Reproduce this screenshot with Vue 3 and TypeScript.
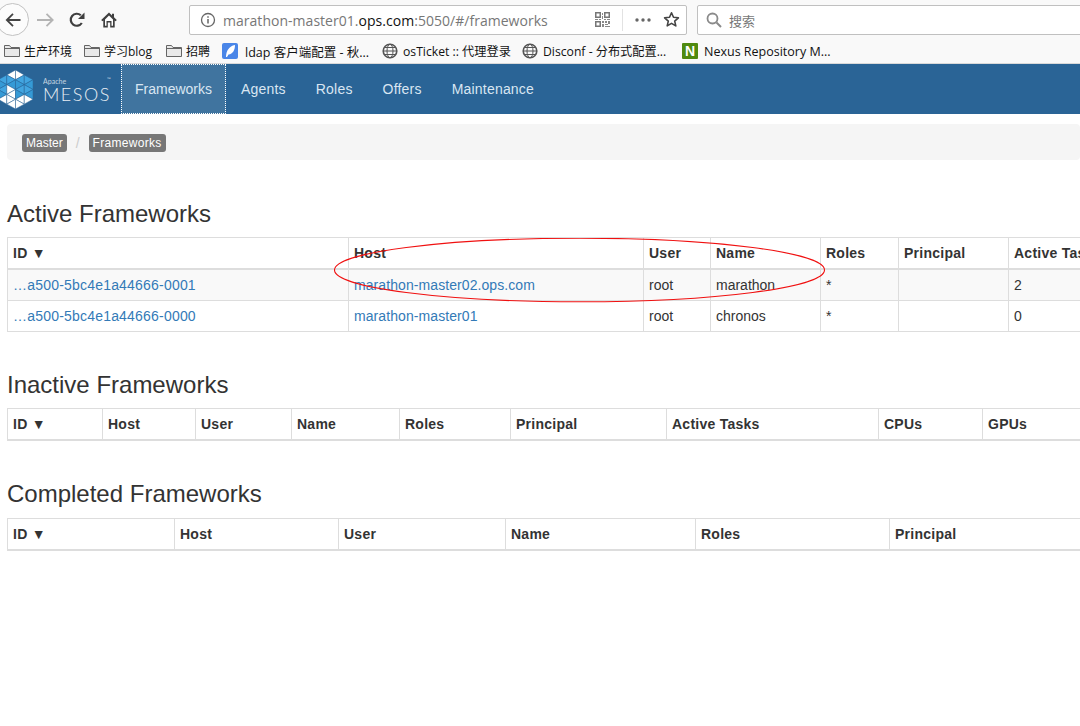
<template>
  <div class="page">
    <!-- browser toolbar -->
    <div class="toolbar">
      <div class="back-btn">
        <svg width="16" height="16" viewBox="0 0 16 16" fill="none">
          <path d="M15.500 8H1.500M8 1.800L1.800 8 8 14.200" stroke="#444" stroke-width="1.800" />
        </svg>
      </div>
      <svg class="tool-icon forward" width="18" height="16" viewBox="0 0 18 16" fill="none">
        <path d="M1 8h15.500M10.500 1.800L16.700 8l-6.200 6.200" stroke="#b4b4b4" stroke-width="1.800" />
      </svg>
      <svg class="tool-icon reload" width="16" height="16" viewBox="0 0 16 16" fill="none">
        <path d="M12.800 11A6 6 0 1 1 11.800 3.300" stroke="#3f3f3f" stroke-width="2.200" />
        <path d="M15.500 .5v6.500H9z" fill="#3f3f3f" />
      </svg>
      <svg class="tool-icon home" width="16" height="16" viewBox="0 0 16 16" fill="none">
        <path d="M8 .5L.2 8l1.200 1.200.9-.8V15.500h4.500V10.500h2.400V15.500h4.500V8.400l.9.8L15.800 8 13 5.300V1.800h-2v1.600z" fill="#3f3f3f" />
        <path d="M8 3.600L4 7.400v6.400h1.500V9h5v4.800H12V7.400z" fill="#fff" />
      </svg>
      <div class="urlbar">
        <svg class="info-icon" width="16" height="16" viewBox="0 0 16 16" fill="none">
          <circle cx="8" cy="8" r="6.500" stroke="#666" stroke-width="1.300" />
          <path d="M8 7v4.500M8 4.200v1.500" stroke="#666" stroke-width="1.500" />
        </svg>
        <span class="url"><span class="url-dim">marathon-master01.</span>ops.com<span class="url-dim">:5050/#/frameworks</span></span>
        <svg class="qr" width="15" height="15" viewBox="0 0 15 15">
          <path d="M0 0h6v6H0zM1.500 1.500v3h3v-3zM9 0h6v6H9zM10.500 1.500v3h3v-3zM0 9h6v6H0zM1.500 10.500v3h3v-3z" fill="#777" fill-rule="evenodd" />
          <path d="M7 1h1v2H7zM7 4h1v3H7zM0 7h3v1H0zM4 7h2v1H4zM9 7h2v1H9zM12 7h3v1h-3zM7 9h2v2H7zM10 9h2v2h-2zM13 9h2v3h-2zM7 12h2v3H7zM10 12h3v1h-3zM10 14h5v1h-5z" fill="#888" />
        </svg>
        <span class="url-sep"></span>
        <svg class="dots" width="16" height="4" viewBox="0 0 16 4" fill="#666">
          <circle cx="2" cy="2" r="1.700" /><circle cx="8" cy="2" r="1.700" /><circle cx="14" cy="2" r="1.700" />
        </svg>
        <svg class="star" width="17" height="17" viewBox="0 0 17 17" fill="none">
          <path d="M8.500 1.800l2 4.500 4.900.5-3.700 3.300 1.100 4.800-4.300-2.500-4.300 2.500 1.100-4.800L1.600 6.800l4.900-.5z" stroke="#444" stroke-width="1.600" stroke-linejoin="round" />
        </svg>
      </div>
      <div class="searchbar">
        <svg width="16" height="16" viewBox="0 0 16 16" fill="none">
          <circle cx="6.500" cy="6.500" r="5" stroke="#8a8a8a" stroke-width="1.800" />
          <path d="M10.500 10.500L15 15" stroke="#8a8a8a" stroke-width="2" />
        </svg>
        <span class="search-text">搜索</span>
      </div>
    </div>

    <!-- bookmarks bar -->
    <div class="bookmarks">
      <div
        v-for="b in bookmarks"
        :key="b.label"
        :class="['bookmark', `bookmark-${b.icon}`]"
        :style="{ width: b.width + 'px' }"
      >
        <svg v-if="b.icon === 'folder'" width="16" height="14" viewBox="0 0 16 14" fill="none">
          <path d="M.5 12.500V1.500h5l1.500 2h8.500v9z" fill="#e9e9e9" stroke="#666" />
          <path d="M.5 4.500h15" stroke="#666" />
        </svg>
        <svg v-else-if="b.icon === 'feather'" width="16" height="16" viewBox="0 0 16 16">
          <rect width="16" height="16" rx="2" fill="#4a86e8" />
          <path d="M4 14C4 8 7 3 13 2c0 5-2 9-6.500 9.500L5 14z" fill="#fff" />
        </svg>
        <svg v-else-if="b.icon === 'globe'" width="16" height="16" viewBox="0 0 16 16" fill="none">
          <circle cx="8" cy="8" r="6.800" stroke="#555" stroke-width="1.600" />
          <ellipse cx="8" cy="8" rx="3" ry="6.800" stroke="#555" />
          <path d="M1 8h14M2 4.500h12M2 11.500h12" stroke="#555" />
        </svg>
        <span v-else class="nexus">N</span>
        <span class="bookmark-label">{{ b.label }}</span>
      </div>
    </div>

    <!-- mesos navbar -->
    <nav class="navbar">
      <div class="brand">
        <svg class="logo" width="35" height="39" viewBox="0 0 35 39">
          <polygon
            v-for="(t, i) in logoTriangles"
            :key="i"
            :points="t.points"
            :fill="t.fill"
            stroke="#2a6496"
            stroke-width="0.5"
          />
        </svg>
        <div class="brand-text">
          <span class="brand-apache">Apache<span class="brand-tm">™</span></span>
          <span class="brand-mesos">MESOS</span>
        </div>
      </div>
      <ul class="nav-list">
        <li v-for="(item, i) in navItems" :key="item" :class="['nav-item', { active: i === 0 }]">{{ item }}</li>
      </ul>
    </nav>

    <main class="content">
      <div class="breadcrumb">
        <span class="crumb">Master</span>
        <span class="crumb-sep">/</span>
        <span class="crumb">Frameworks</span>
      </div>

      <section v-for="t in tables" :key="t.title" class="block">
        <h3 class="block-title">{{ t.title }}</h3>
        <table class="fw-table">
          <colgroup>
            <col v-for="c in t.columns" :key="c.name" :style="{ width: c.width + 'px' }" />
          </colgroup>
          <thead>
            <tr>
              <th v-for="c in t.columns" :key="c.name">{{ c.name }}</th>
            </tr>
          </thead>
          <tbody v-if="t.rows.length">
            <tr v-for="(r, ri) in t.rows" :key="ri" :class="{ odd: ri === 0 }">
              <td v-for="(v, ci) in r" :key="ci" :class="{ 'link-id': ci === 0, link: ci === 1 }">{{ v }}</td>
            </tr>
          </tbody>
        </table>
      </section>

      <!-- red annotation drawn over the screenshot -->
      <svg class="annotation" width="494" height="68" viewBox="0 0 494 68" fill="none">
        <ellipse cx="245.500" cy="32" rx="245" ry="31.800" stroke="#f01010" stroke-width="1.100" />
      </svg>
    </main>
  </div>
</template>

<script setup lang="ts">
interface Column {
  name: string
  width: number
}

interface FrameworkTable {
  title: string
  columns: Column[]
  rows: string[][]
}

function cols(names: string[], edges: number[]): Column[] {
  return names.map((name, i) => ({ name, width: edges[i + 1] - edges[i] }))
}

const navItems = ['Frameworks', 'Agents', 'Roles', 'Offers', 'Maintenance']

const bookmarks = [
  { icon: 'folder', label: '生产环境', width: 80 },
  { icon: 'folder', label: '学习blog', width: 82 },
  { icon: 'folder', label: '招聘', width: 56 },
  { icon: 'feather', label: 'ldap 客户端配置 - 秋...', width: 160 },
  { icon: 'globe', label: 'osTicket :: 代理登录', width: 140 },
  { icon: 'globe', label: 'Disconf - 分布式配置...', width: 160 },
  { icon: 'nexus', label: 'Nexus Repository M...', width: 160 }
]

const tables: FrameworkTable[] = [
  {
    title: 'Active Frameworks',
    columns: cols(
      ['ID ▼', 'Host', 'User', 'Name', 'Roles', 'Principal', 'Active Tasks'],
      [7, 348, 643, 710, 820, 898, 1008, 1120]
    ),
    rows: [
      ['…a500-5bc4e1a44666-0001', 'marathon-master02.ops.com', 'root', 'marathon', '*', '', '2'],
      ['…a500-5bc4e1a44666-0000', 'marathon-master01', 'root', 'chronos', '*', '', '0']
    ]
  },
  {
    title: 'Inactive Frameworks',
    columns: cols(
      ['ID ▼', 'Host', 'User', 'Name', 'Roles', 'Principal', 'Active Tasks', 'CPUs', 'GPUs'],
      [7, 102, 195, 291, 399, 510, 666, 878, 982, 1100]
    ),
    rows: []
  },
  {
    title: 'Completed Frameworks',
    columns: cols(
      ['ID ▼', 'Host', 'User', 'Name', 'Roles', 'Principal'],
      [7, 174, 338, 505, 695, 889, 1100]
    ),
    rows: []
  }
]

// logo mesh: columns 8.75px apart, half rows 4.875px apart
const W = '#ffffff'
const B = '#42a5e0'
const C = '#359ad6'
function tri(a: number[], b: number[], c: number[], fill: string) {
  const p = (q: number[]) => `${q[0] * 8.75},${q[1] * 4.875}`
  return { points: `${p(a)} ${p(b)} ${p(c)}`, fill }
}
const logoTriangles = [
  tri([0, 2], [1, 1], [1, 3], B),
  tri([0, 2], [0, 4], [1, 3], C),
  tri([0, 4], [1, 3], [1, 5], B),
  tri([0, 4], [0, 6], [1, 5], C),
  tri([0, 6], [1, 5], [1, 7], W),
  tri([1, 1], [2, 0], [2, 2], W),
  tri([1, 1], [1, 3], [2, 2], B),
  tri([1, 3], [2, 2], [2, 4], C),
  tri([1, 3], [1, 5], [2, 4], W),
  tri([1, 5], [2, 4], [2, 6], W),
  tri([1, 5], [1, 7], [2, 6], W),
  tri([1, 7], [2, 6], [2, 8], W),
  tri([3, 1], [2, 0], [2, 2], W),
  tri([3, 1], [3, 3], [2, 2], B),
  tri([3, 3], [2, 2], [2, 4], C),
  tri([3, 3], [3, 5], [2, 4], B),
  tri([3, 5], [2, 4], [2, 6], C),
  tri([3, 5], [3, 7], [2, 6], W),
  tri([3, 7], [2, 6], [2, 8], W),
  tri([4, 2], [3, 1], [3, 3], B),
  tri([4, 2], [4, 4], [3, 3], C),
  tri([4, 4], [3, 3], [3, 5], B),
  tri([4, 4], [4, 6], [3, 5], C),
  tri([4, 6], [3, 5], [3, 7], W)
]
</script>

<style>
html,
body {
  margin: 0;
  background: #fff;
  overflow: hidden;
}
</style>

<style scoped>
.page {
  width: 1080px;
  height: 726px;
  overflow: hidden;
  font-family: 'Liberation Sans', Arial, sans-serif;
  color: #333;
}

/* toolbar */
.toolbar {
  display: flex;
  align-items: center;
  height: 39px;
  background: #f9f9f9;
  box-sizing: border-box;
}

.back-btn {
  display: flex;
  align-items: center;
  justify-content: center;
  flex: none;
  width: 33px;
  height: 33px;
  margin-left: -4px;
  border: 1px solid #c2c2c2;
  border-radius: 50%;
  background: #fcfcfc;
  box-sizing: border-box;
}

.tool-icon {
  flex: none;
}

.forward {
  margin-left: 7px;
}

.reload {
  margin-left: 15px;
}

.home {
  margin-left: 16px;
}

.urlbar {
  display: flex;
  align-items: center;
  flex: none;
  width: 498px;
  height: 30px;
  margin-left: 72px;
  padding: 0 6px 0 10px;
  background: #fff;
  border: 1px solid #c0c0c0;
  border-radius: 2px;
  box-sizing: border-box;
}

.url {
  margin-left: 7px;
  padding-top: 2px;
  font-family: 'Open Sans', sans-serif;
  font-size: 14px;
  letter-spacing: 0.030px;
  color: #111;
  white-space: nowrap;
  flex: 1;
}

.url-dim {
  color: #777;
}

.qr {
  flex: none;
}

.url-sep {
  width: 1px;
  height: 22px;
  margin: 0 12px 0 12px;
  background: #e2e2e2;
}

.dots {
  flex: none;
}

.star {
  margin-left: 12px;
  flex: none;
}

.searchbar {
  display: flex;
  align-items: center;
  flex: none;
  width: 400px;
  height: 30px;
  margin-left: 10px;
  padding-left: 8px;
  background: #fff;
  border: 1px solid #c0c0c0;
  border-radius: 2px;
  box-sizing: border-box;
}

.search-text {
  margin-left: 7px;
  padding-top: 1px;
  font-family: 'Noto Sans CJK SC', sans-serif;
  font-size: 13px;
  color: #777;
}

/* bookmarks */
.bookmarks {
  display: flex;
  align-items: center;
  height: 24px;
  padding-left: 4px;
  background: #f9f9f9;
  border-bottom: 1px solid #d9d9d9;
}

.bookmark {
  display: flex;
  align-items: center;
  flex: none;
  gap: 6px;
  white-space: nowrap;
  font-family: 'Open Sans', 'Noto Sans CJK SC', sans-serif;
  font-size: 12.500px;
  color: #111;
}

.bookmark-folder {
  gap: 4px;
  font-size: 12px;
}

.bookmark-feather {
  gap: 7px;
}

.bookmark-globe {
  gap: 5px;
  font-size: 12.200px;
}

.nexus {
  display: flex;
  align-items: center;
  justify-content: center;
  width: 16px;
  height: 16px;
  background: #4f8a10;
  color: #fff;
  font-family: 'Liberation Sans', sans-serif;
  font-weight: 700;
  font-size: 14px;
  border-radius: 1px;
}

/* navbar */
.navbar {
  display: flex;
  height: 50px;
  background: #2a6496;
}

.brand {
  display: flex;
  align-items: center;
  gap: 10px;
  width: 121px;
  flex: none;
}

.logo {
  flex: none;
  margin-left: -2px;
}

.brand-text {
  display: flex;
  flex-direction: column;
  color: #e8eef4;
  margin-top: 1px;
}

.brand-apache {
  display: flex;
  justify-content: space-between;
  font-family: 'Lato', sans-serif;
  font-size: 7px;
  line-height: 8px;
  opacity: 0.8;
}

.brand-tm {
  font-size: 5px;
  line-height: 5px;
}

.brand-mesos {
  font-family: 'Lato', sans-serif;
  font-weight: 300;
  font-size: 18px;
  line-height: 18px;
  letter-spacing: 1.500px;
}

.nav-list {
  display: flex;
  margin: 0;
  padding: 0;
  list-style: none;
}

.nav-item {
  padding: 0 15px;
  line-height: 50px;
  font-size: 14px;
  letter-spacing: 0.200px;
  color: #d9e6f2;
}

.nav-item.active {
  width: 105px;
  padding: 0;
  box-sizing: border-box;
  text-align: center;
  letter-spacing: 0;
  background: #40749f;
  border: 1px dotted #fff;
  line-height: 48px;
}

/* content */
.content {
  position: relative;
  padding: 10px 0 0 7px;
}

.breadcrumb {
  display: flex;
  align-items: center;
  height: 36px;
  padding: 2px 0 0 15px;
  box-sizing: border-box;
  background: #f5f5f5;
  border-radius: 4px;
}

.crumb {
  padding: 2px 4px;
  background: #777;
  color: #fff;
  font-size: 12px;
  line-height: 14px;
  border-radius: 3px;
}

.crumb:last-child {
  letter-spacing: 0.300px;
}

.crumb-sep {
  margin: 0 9px;
  font-size: 14px;
  color: #ccc;
}

.block {
  margin-bottom: 40px;
}

.block:first-of-type {
  margin-top: 40.600px;
}

.block-title {
  margin: 0 0 10px;
  font-size: 24px;
  font-weight: 400;
  line-height: 26.400px;
  color: #333;
}

.fw-table {
  table-layout: fixed;
  border-collapse: collapse;
  width: max-content;
  font-size: 14px;
  line-height: 20px;
}

.fw-table th,
.fw-table td {
  padding: 5px;
  border: 1px solid #ddd;
  text-align: left;
  vertical-align: top;
  white-space: nowrap;
  overflow: hidden;
}

.fw-table th {
  border-bottom-width: 2px;
  font-weight: 700;
  letter-spacing: 0.250px;
}

.fw-table tr.odd td {
  background: #f9f9f9;
}

.fw-table td.link {
  color: #337ab7;
  letter-spacing: 0.080px;
}

.fw-table td.link-id {
  color: #337ab7;
  letter-spacing: 0.200px;
}

.annotation {
  position: absolute;
  left: 334px;
  top: 124px;
}
</style>
